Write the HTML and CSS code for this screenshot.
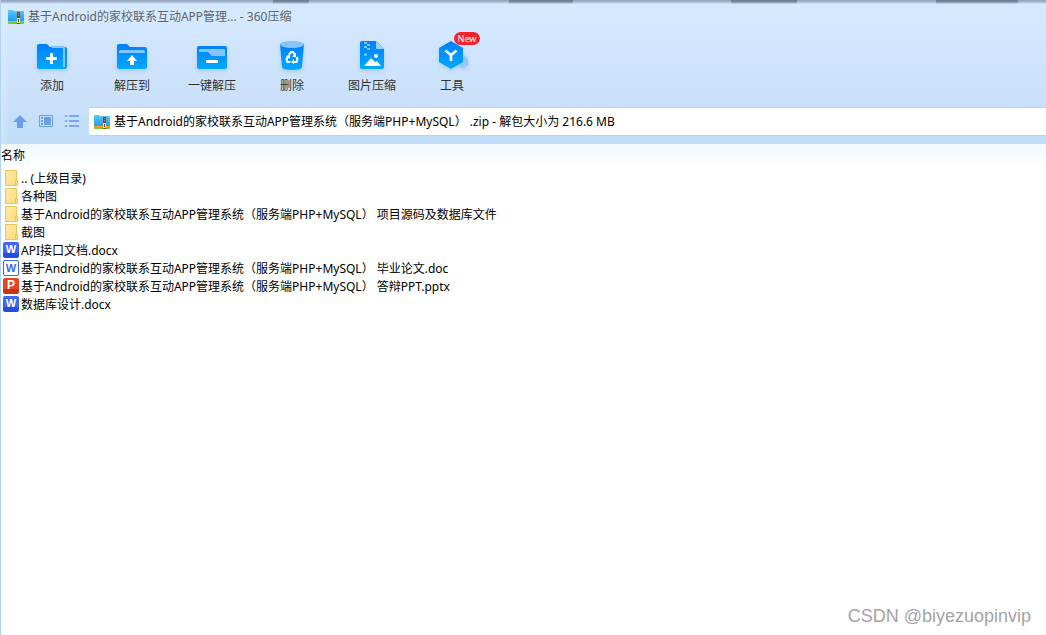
FILE: index.html
```html
<!DOCTYPE html>
<html lang="zh-CN">
<head>
<meta charset="utf-8">
<meta name="viewport" content="width=device-width, initial-scale=1">
<title>360压缩</title>
<link rel="stylesheet" href="styles.css">
</head>
<body>
<svg class="defs" aria-hidden="true">
  <defs>
    <linearGradient id="blue" x1="0" y1="0" x2="0" y2="1"><stop offset="0" stop-color="#0080ff"/><stop offset="1" stop-color="#00a8ff"/></linearGradient>
    <linearGradient id="cyan" x1="0" y1="0" x2="0" y2="1"><stop offset="0" stop-color="#5cc9fb"/><stop offset="1" stop-color="#1e9df2"/></linearGradient>
    <linearGradient id="yellow" x1="0" y1="0" x2="1" y2="1"><stop offset="0" stop-color="#ffe9a4"/><stop offset="1" stop-color="#fadb7c"/></linearGradient>
    <symbol id="zip" viewBox="0 0 16 14">
      <path d="M0 1q0-1 1-1h4l1 1h9q1 0 1 1v9H0z" fill="url(#cyan)"/>
      <path d="M0 11h16v1H0z" fill="#ffa51e"/><path d="M0 12h16v1q0 1-1 1H1q-1 0-1-1z" fill="#7cc52c"/>
      <path d="M9 2h3v12H9z" fill="#8f4310"/><path d="M10 3h1v1h-1zm0 2h1v1h-1z" fill="#d98a3e"/>
      <path d="M9 8h3v1H9zm0 4h3v1H9zm0-3h1v3H9zm2 0h1v3h-1z" fill="#ffe08a"/>
    </symbol>
    <symbol id="folder" viewBox="0 0 16 16">
      <path d="M2.500.5h11v10h1v5h-12z" fill="url(#yellow)" stroke="#e8c65a"/>
      <path d="M12.500 15v-4.500h1" fill="none" stroke="#e8c65a"/>
    </symbol>
  </defs>
</svg>
<div class="window">
  <header class="chrome">
    <div class="titlebar">
      <svg class="zip-icon" aria-hidden="true"><use href="#zip"/></svg>
      <h1 class="title">基于Android的家校联系互动APP管理... - 360压缩</h1>
    </div>
    <nav class="toolbar" aria-label="工具栏">
      <button class="tool" type="button">
        <svg class="tool-icon" viewBox="0 0 32 32"><path d="M1 5q0-2 2-2h8l3 3h15q2 0 2 2v18q0 2-2 2H3q-2 0-2-2z" fill="url(#blue)"/><path d="M15 5h12q2 0 2 2v19h-2V8q0-1-1-1H16z" fill="#85c5ff"/><path d="M14 12h3v4h4v3h-4v4h-3v-4h-4v-3h4z" fill="#fff"/></svg>
        <span>添加</span>
      </button>
      <button class="tool" type="button">
        <svg class="tool-icon" viewBox="0 0 32 32"><path d="M1 5q0-2 2-2h8l3 3h15q2 0 2 2v18q0 2-2 2H3q-2 0-2-2z" fill="url(#blue)"/><path d="M3 12v-1q0-2 2-2h22q2 0 2 2v1z" fill="#85c5ff"/><path d="M16 14l5 6h-3v4h-4v-4h-3z" fill="#fff"/></svg>
        <span>解压到</span>
      </button>
      <button class="tool" type="button">
        <svg class="tool-icon" viewBox="0 0 32 32"><path d="M1 7q0-2 2-2h26q2 0 2 2v19q0 2-2 2H3q-2 0-2-2z" fill="url(#blue)"/><path d="M3 11V9q0-1 1-1h24q1 0 1 1v6H16q-1 0-2-2l-2-2z" fill="#85c5ff"/><rect x="10" y="19" width="12" height="3" rx="1" fill="#fff"/></svg>
        <span>一键解压</span>
      </button>
      <button class="tool" type="button">
        <svg class="tool-icon" viewBox="0 0 32 32"><path d="M4 3h24l-2 23q0 3-10 3T6 26z" fill="url(#blue)"/><ellipse cx="16" cy="3.500" rx="12" ry="3.500" fill="#85c5ff"/><g fill="none" stroke="#fff" stroke-width="2.200"><path d="M13 14l2-3h2l2 3"/><path d="M20.500 16l1 2-1 3h-3"/><path d="M14.500 21h-3l-1-3 2-3"/></g><path d="M20 12v4h-4zM18 18v5l-3-2zM10 15l4-1v4z" fill="#fff"/></svg>
        <span>删除</span>
      </button>
      <button class="tool" type="button">
        <svg class="tool-icon" viewBox="0 0 32 32"><path d="M4 2q0-2 2-2h14l8 8v18q0 2-2 2H6q-2 0-2-2z" fill="url(#blue)"/><path d="M20 0l8 8h-7q-1 0-1-1z" fill="#9dd0ff"/><path d="M8 1h3v2H8zm3 2h3v2h-3zM8 5h3v2H8zm3 2h3v2h-3z" fill="#85c5ff"/><circle cx="9.500" cy="13.500" r="1.500" fill="#85c5ff"/><circle cx="20" cy="15" r="2" fill="#fff"/><path d="M8 25l7-8 4 4 2-1 4 5z" fill="#fff"/></svg>
        <span>图片压缩</span>
      </button>
      <button class="tool" type="button">
        <svg class="tool-icon" viewBox="0 0 32 32"><path d="M24 16l4-2 4 4v6l-5 3-5-3z" fill="#8fc8ff"/><path d="M15 0l12 7v14l-12 7-12-7V7z" fill="url(#blue)"/><path d="M9.500 9.500L15 14l5.500-4.500M15 13v7" fill="none" stroke="#fff" stroke-width="2.600"/></svg>
        <span>工具</span>
        <span class="badge">New</span>
      </button>
    </nav>
    <div class="locationbar">
      <div class="views">
        <button class="view" type="button" aria-label="上级目录"><svg viewBox="0 0 16 16"><path d="M8 1l7 7h-4v6H5V8H1z" fill="#6a9fea"/></svg></button>
        <button class="view" type="button" aria-label="预览视图"><svg viewBox="0 0 16 16"><path d="M1.500 1.500h13v11h-13z" fill="none" stroke="#6a9fea"/><path d="M3 3h2v2H3zm0 3h2v2H3zm0 3h2v2H3zM6 3h7v8H6z" fill="#6a9fea"/></svg></button>
        <button class="view" type="button" aria-label="列表视图"><svg viewBox="0 0 16 16"><path d="M1 1h2v2H1zm0 5h2v2H1zm0 5h2v2H1zM5 1h10v2H5zm0 5h10v2H5zm0 5h10v2H5z" fill="#7aabee"/></svg></button>
      </div>
      <label class="address">
        <svg class="zip-icon" aria-hidden="true"><use href="#zip"/></svg>
        <input class="path" type="text" aria-label="路径" value="基于Android的家校联系互动APP管理系统（服务端PHP+MySQL） .zip - 解包大小为 216.6 MB">
      </label>
    </div>
  </header>
  <main class="content">
    <table class="files">
      <thead><tr><th scope="col">名称</th></tr></thead>
      <tbody>
        <tr><td><div class="file"><svg class="file-icon"><use href="#folder"/></svg>.. (上级目录)</div></td></tr>
        <tr><td><div class="file"><svg class="file-icon"><use href="#folder"/></svg>各种图</div></td></tr>
        <tr><td><div class="file"><svg class="file-icon"><use href="#folder"/></svg>基于Android的家校联系互动APP管理系统（服务端PHP+MySQL） 项目源码及数据库文件</div></td></tr>
        <tr><td><div class="file"><svg class="file-icon"><use href="#folder"/></svg>截图</div></td></tr>
        <tr><td><div class="file"><span class="doc word">W</span>API接口文档.docx</div></td></tr>
        <tr><td><div class="file"><span class="doc word-old">W</span>基于Android的家校联系互动APP管理系统（服务端PHP+MySQL） 毕业论文.doc</div></td></tr>
        <tr><td><div class="file"><span class="doc slides">P</span>基于Android的家校联系互动APP管理系统（服务端PHP+MySQL） 答辩PPT.pptx</div></td></tr>
        <tr><td><div class="file"><span class="doc word">W</span>数据库设计.docx</div></td></tr>
      </tbody>
    </table>
    <p class="watermark">CSDN @biyezuopinvip</p>
  </main>
</div>
</body>
</html>
```
FILE: styles.css
```css
* { box-sizing: border-box; }
body {
  margin: 0;
  color: #000;
  background: #fff;
  font: 12px/18px "Noto Sans", "Noto Sans CJK SC", sans-serif;
}
button, input { font: inherit; color: inherit; }
.defs { position: absolute; width: 0; height: 0; }
.window {
  min-height: 100vh;
  display: flex;
  flex-direction: column;
  border-left: 1px solid #b2d3f7;
}
.chrome {
  --shade: linear-gradient(#65778c, #65778c99 2px, transparent);
  background:
    var(--shade) 272px 0 / 36px 4px no-repeat,
    var(--shade) 508px 0 / 64px 4px no-repeat,
    var(--shade) 730px 0 / 66px 4px no-repeat,
    var(--shade) 935px 0 / 82px 4px no-repeat,
    linear-gradient(#8ea3b9, #a6bbd1 2px, transparent 4px),
    linear-gradient(90deg, #e8f4ff60, transparent 8px),
    linear-gradient(#d6eaff, #d4e9fe 24px, #cfe4fd 58px, #cae1f9 100px, #c2ddf9 140px);
}
.titlebar {
  display: flex;
  align-items: center;
  gap: 4px;
  height: 32px;
  padding: 1px 7px 0;
}
.zip-icon { flex: none; width: 16px; height: 14px; }
.title { margin: 0; font-size: 12px; font-weight: 400; color: #5d656d; }
.toolbar { display: flex; padding: 9px 11px 0; height: 75px; }
.tool {
  position: relative;
  width: 80px;
  height: 56px;
  padding: 0;
  border: 0;
  background: none;
  color: #333;
  display: flex;
  flex-direction: column;
  align-items: center;
  gap: 4px;
}
.tool-icon { width: 32px; height: 32px; filter: drop-shadow(0 2px 2px #3b91e840); }
.badge {
  position: absolute;
  top: -9px;
  left: 42px;
  width: 26px;
  border-radius: 7px;
  background: #f5222d;
  color: #fff;
  font-size: 9px;
  line-height: 13px;
  text-align: center;
}
.locationbar { display: flex; padding-bottom: 8px; }
.views { display: flex; align-items: center; gap: 10px; padding: 0 9px 0 11px; }
.view { width: 16px; height: 16px; padding: 0; border: 0; background: none; }
.view svg { display: block; }
.address {
  flex: 1;
  display: flex;
  align-items: center;
  gap: 4px;
  height: 29px;
  padding-left: 5px;
  background: #fff;
  border: 1px solid #b5d3f3;
  border-right: 0;
  border-left: 0;
}
.path { flex: 1; min-width: 0; padding: 0; border: 0; outline: 0; background: none; }
.content {
  flex: 1;
  display: flex;
  flex-direction: column;
  justify-content: space-between;
  background: linear-gradient(#f2f8ff, #fff 24px);
}
.files { width: 100%; border-collapse: collapse; }
.files th { height: 26px; padding: 0 0 2px; font-weight: 400; text-align: left; }
.files td { padding: 0; }
.file { display: flex; align-items: center; gap: 2px; height: 18px; padding-left: 2px; white-space: pre; }
.file-icon, .doc { flex: none; width: 16px; height: 16px; }
.file-icon { margin-bottom: 2px; }
.doc {
  margin-bottom: 2px;
  border-radius: 2px;
  color: #fff;
  font: 700 11px/14px "Liberation Sans", sans-serif;
  text-align: center;
}
.word { background: linear-gradient(#3d68f2 11px, #2450e2 11px); }
.word-old { border: 1px solid #4167e8; color: #3d68f2; background: #fff; }
.slides { background: linear-gradient(#e64525 11px, #cc3217 11px); font-size: 12px; }
.watermark {
  margin: 0 15px 8px 0;
  color: #a3a3a3;
  font: 18px/22px "Liberation Sans", sans-serif;
  text-align: right;
}
```
